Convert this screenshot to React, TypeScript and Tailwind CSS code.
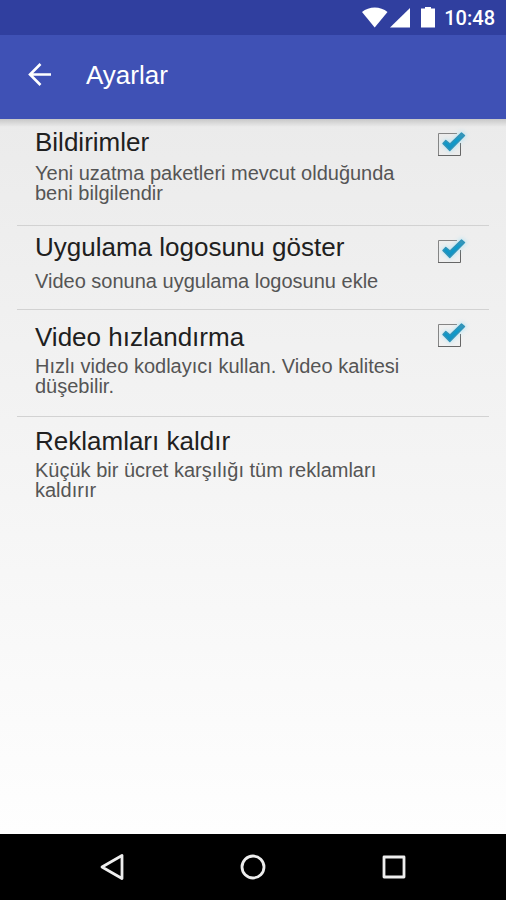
import { useId, useState } from "react";

type Setting = {
  title: string;
  description: string;
  checkable: boolean;
  textClass: string;
};

const settings: Setting[] = [
  {
    title: "Bildirimler",
    description: "Yeni uzatma paketleri mevcut olduğunda beni bilgilendir",
    checkable: true,
    textClass: "gap-[6px] pt-2 pb-[22px]",
  },
  {
    title: "Uygulama logosunu göster",
    description: "Video sonuna uygulama logosunu ekle",
    checkable: true,
    textClass: "gap-[9px] pt-[6px] pb-[18px]",
  },
  {
    title: "Video hızlandırma",
    description: "Hızlı video kodlayıcı kullan. Video kalitesi düşebilir.",
    checkable: true,
    textClass: "gap-1 pt-3 pb-5",
  },
  {
    title: "Reklamları kaldır",
    description: "Küçük bir ücret karşılığı tüm reklamları kaldırır",
    checkable: false,
    textClass: "gap-1 pt-[9px] pb-5",
  },
];

function StatusBar() {
  return (
    <div className="flex h-[35px] items-center justify-end bg-[#303f9f] pr-[11px] text-white">
      <svg className="h-[35px] w-[73px]" viewBox="0 0 73 35" fill="currentColor" aria-hidden="true">
        <path d="M0 12C7 6 18.500 6 25.500 12L12.700 27.500Z" />
        <path d="M48 8V27.500H28Z" />
        <path d="M63 8.500V7H69V8.500H73V27.500H59V8.500Z" />
      </svg>
      <time className="ml-[9px] pt-px font-[Roboto,sans-serif] text-xl leading-[34px] font-medium">10:48</time>
    </div>
  );
}

function AppBar() {
  return (
    <header className="flex h-[84px] items-center bg-[#3f51b5] pb-1 pl-7 text-white">
      <button type="button" aria-label="Geri" className="mr-[34px] size-6">
        <svg viewBox="0 0 24 24" className="size-6" fill="none" stroke="currentColor" strokeWidth="2.6" aria-hidden="true">
          <path d="M12.500 1L2 11.500L12.500 22M2 11.500H23" />
        </svg>
      </button>
      <h1 className="text-[26px] leading-[30px]">Ayarlar</h1>
    </header>
  );
}

function CheckBox({ id }: { id: string }) {
  const [checked, setChecked] = useState(true);
  return (
    <span className="mt-[13px] grid h-6 w-8 shrink-0">
      <input
        id={id}
        type="checkbox"
        checked={checked}
        onChange={(event) => setChecked(event.target.checked)}
        className="col-start-1 row-start-1 size-6 cursor-pointer appearance-none"
      />
      <svg
        viewBox="0 0 32 24"
        className="pointer-events-none col-start-1 row-start-1 h-6 w-8 overflow-visible"
        fill="none"
        aria-hidden="true"
      >
        <defs>
          <linearGradient id={id + "-fill"} x1="0" y1="0" x2="0" y2="1">
            <stop offset="0" stopColor="#4a93b2" />
            <stop offset="0.4" stopColor="#0c9ccc" />
            <stop offset="1" stopColor="#168fc0" />
          </linearGradient>
          <filter id={id + "-glow"} x="-30%" y="-30%" width="160%" height="160%">
            <feGaussianBlur stdDeviation="2" />
          </filter>
        </defs>
        <path d="M20 1.500H1.500V23" stroke="#858585" />
        <path d="M1 23.500H23.500V11" stroke="#666666" />
        {!checked && <path d="M20 1.500H23.500V11" stroke="#777777" />}
        {checked && (
          <>
            <path
              d="M6 11.500L9 8.500L13 12L24.500 0.500L28 3.500L13 18.500Z"
              fill="#8edcf5"
              stroke="#8edcf5"
              strokeWidth="3"
              opacity="0.5"
              filter={"url(#" + id + "-glow)"}
            />
            <path
              d="M6 11.500L8.800 8.500L13 12L24.500 1L27.500 3.500L12.800 18.500Z"
              fill={"url(#" + id + "-fill)"}
              stroke="#2f93b8"
              strokeWidth="1.4"
              strokeLinejoin="round"
            />
          </>
        )}
      </svg>
    </span>
  );
}

function SettingRow({ setting }: { setting: Setting }) {
  const id = useId();
  const text = (
    <>
      <span className="text-[26px] leading-[30px] text-[#202020]">{setting.title}</span>
      <span className="text-xl leading-5 text-[#555555]">{setting.description}</span>
    </>
  );
  return (
    <li className="flex border-b border-[#d2d2d2] pr-5 pl-[18px] last:border-0">
      {setting.checkable ? (
        <>
          <label htmlFor={id} className={"flex flex-1 flex-col pr-8 " + setting.textClass}>
            {text}
          </label>
          <CheckBox id={id} />
        </>
      ) : (
        <button type="button" className={"mr-8 flex flex-1 flex-col pr-8 text-left " + setting.textClass}>
          {text}
        </button>
      )}
    </li>
  );
}

function NavigationBar() {
  return (
    <nav className="grid h-[66px] grid-cols-3 bg-black px-[42px] text-[#eeeeee]">
      <button type="button" aria-label="Geri" className="grid place-items-center">
        <svg className="size-7" viewBox="0 0 28 28" fill="none" stroke="currentColor" strokeWidth="2.8" strokeLinejoin="round" aria-hidden="true">
          <path d="M24 2.500V25.500L4 14Z" />
        </svg>
      </button>
      <button type="button" aria-label="Ana ekran" className="grid place-items-center">
        <svg className="size-7" viewBox="0 0 28 28" fill="none" stroke="currentColor" strokeWidth="2.8" aria-hidden="true">
          <circle cx="14" cy="14" r="11" />
        </svg>
      </button>
      <button type="button" aria-label="Son uygulamalar" className="grid place-items-center">
        <svg className="size-7" viewBox="0 0 28 28" fill="none" stroke="currentColor" strokeWidth="2.8" strokeLinejoin="round" aria-hidden="true">
          <rect x="4" y="4" width="20" height="20" />
        </svg>
      </button>
    </nav>
  );
}

export default function App() {
  return (
    <div className="flex min-h-screen flex-col font-['Liberation_Sans',Arial,sans-serif]">
      <StatusBar />
      <AppBar />
      <main className="flex-1 bg-linear-to-b from-[#ebebeb] to-[#fefefe]">
        <div className="-mb-2 h-2 bg-linear-to-b from-black/15 to-transparent" />
        <ul className="mx-[17px]">
          {settings.map((setting) => (
            <SettingRow key={setting.title} setting={setting} />
          ))}
        </ul>
      </main>
      <NavigationBar />
    </div>
  );
}
